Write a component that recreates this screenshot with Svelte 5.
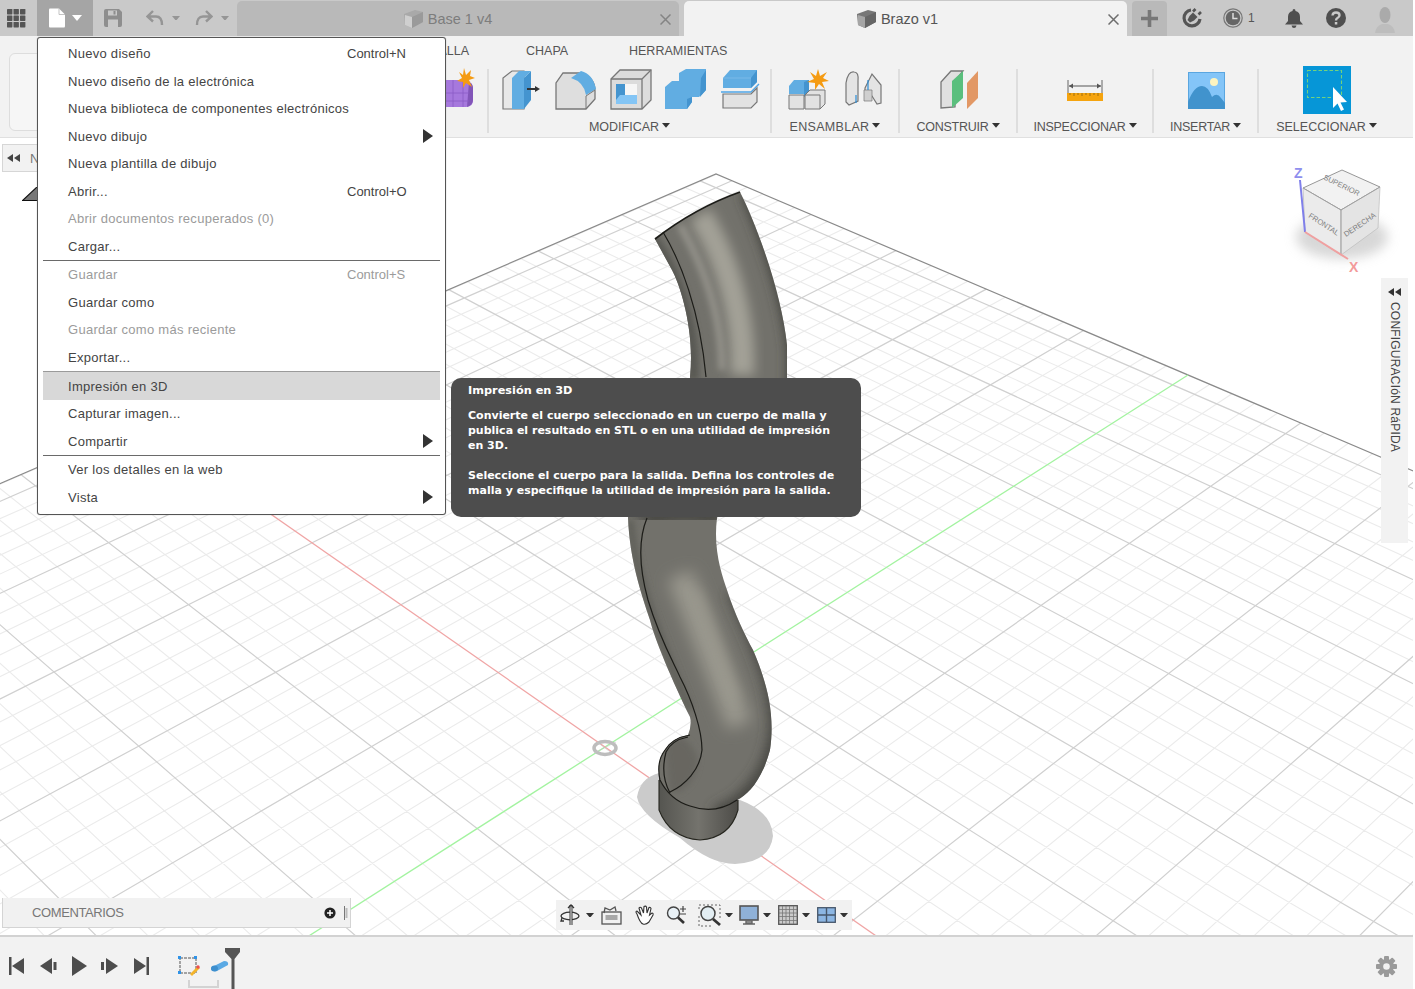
<script>
  const H = (() => {
    const [x0,y0,x1,y1,x2,y2,x3,y3] = [716,174,1188,375,605,747,140,423];
    const dx1=x1-x2,dx2=x3-x2,sx=x0-x1+x2-x3,dy1=y1-y2,dy2=y3-y2,sy=y0-y1+y2-y3;
    const den=dx1*dy2-dx2*dy1;
    const g=(sx*dy2-dx2*sy)/den,h=(dx1*sy-sx*dy1)/den;
    const a=x1-x0+g*x1,b=x3-x0+h*x3,d=y1-y0+g*y1,e=y3-y0+h*y3;
    return (s,t)=>{const w=1+g*s+h*t;return [((a*s+b*t+x0)/w).toFixed(1),((d*s+e*t+y0)/w).toFixed(1)]};
  })();
  const STEP_S = 0.192/5, STEP_T = 0.161/5;
  let minor = '', major = '';
  for (let k = -30; k <= 30; k++) {
    if (k === 0) continue;
    const s = 1 + k*STEP_S, t = 1 + k*STEP_T;
    let seg = '';
    if (s > 0 && s < 2) seg += `M${H(s,0)}L${H(s,2)}`;
    if (t > 0 && t < 2) seg += `M${H(0,t)}L${H(2,t)}`;
    if (k % 5 === 0) major += seg; else minor += seg;
  }
  const edges = `M${H(2,0)}L${H(0,0)}L${H(0,2)}`;
  const green = `M${H(1,0)}L${H(1,2)}`;
  const red = `M${H(0,1)}L${H(2,1)}`;
  const ARM = "M655 239Q695 208 740 192C760 232 782 297 787 345L787 400C780 470 725 490 717 518C713 550 722 575 727 590C735 615 745 635 753 650C768 685 775 715 770 750C762 780 748 795 737 800Q715 815 690 806Q670 800 660 780Q656 762 665 750Q672 738 688 735Q692 725 690 717C672 680 655 640 650 620C640 590 630 560 628 518C632 460 695 420 690 377C695 330 680 285 672 270Z";

  const menu = [
    [{t:'Nuevo diseño',s:'Control+N'},{t:'Nuevo diseño de la electrónica'},{t:'Nueva biblioteca de componentes electrónicos'},{t:'Nuevo dibujo',a:1},{t:'Nueva plantilla de dibujo'},{t:'Abrir...',s:'Control+O'},{t:'Abrir documentos recuperados (0)',d:1},{t:'Cargar...'}],
    [{t:'Guardar',s:'Control+S',d:1},{t:'Guardar como'},{t:'Guardar como más reciente',d:1},{t:'Exportar...'}],
    [{t:'Impresión en 3D',h:1},{t:'Capturar imagen...'},{t:'Compartir',a:1}],
    [{t:'Ver los detalles en la web'},{t:'Vista',a:1}]
  ];
</script>

{#snippet caret(w=8,c='#333')}
  <svg class="caret" width={w} height={w*0.6} viewBox="0 0 10 6"><path d="M0 0H10L5 6Z" fill={c}/></svg>
{/snippet}

{#snippet cube(c1,c2,c3)}
  <svg width="21" height="20" viewBox="0 0 21 20"><path d="M1 5L12 1L20 3V13L9 19L2 16Z" fill={c1}/><path d="M9 8L20 3V13L9 19Z" fill={c2}/><path d="M2 6L9 8V19L2 16Z" fill={c3}/></svg>
{/snippet}

<div class="app">
  <header class="titlebar">
    <div class="tb-grid">
      <svg width="19" height="19" viewBox="0 0 19 19" fill="#555">
        {#each [0,6.5,13] as y}{#each [0,6.5,13] as x}<rect {x} {y} width="5.4" height="5.4" rx=".6"/>{/each}{/each}
      </svg>
    </div>
    <div class="tb-file">
      <svg width="18" height="20" viewBox="0 0 18 20"><path d="M1 1.5Q1 .5 2 .5H11L17 6.5V18Q17 19.500 16 19.500H2Q1 19.500 1 18.500Z" fill="#fff"/><path d="M11 .5V6.500H17" fill="none" stroke="#aaa" stroke-width=".7"/></svg>
      {@render caret(10,'#fff')}
    </div>
    <div class="tb-save">
      <svg width="18" height="18" viewBox="0 0 18 18"><path d="M0 2Q0 0 2 0H15L18 3V16Q18 18 16 18H2Q0 18 0 16Z" fill="#8e8e8e"/><rect x="4" y="1.500" width="9" height="5" fill="#c9c9c9"/><rect x="9.500" y="2" width="2" height="3.500" fill="#8e8e8e"/><rect x="4" y="10.500" width="10" height="7.500" fill="#c9c9c9"/></svg>
    </div>
    <div class="tb-undo">
      <svg width="18" height="16" viewBox="0 0 18 16"><path d="M7 1L1.500 6.500L7 11.500M2 6.500H10Q16 6.500 16 15" fill="none" stroke="#959595" stroke-width="2.400"/></svg>
      {@render caret(8,'#959595')}
    </div>
    <div class="tb-redo">
      <svg width="18" height="16" viewBox="0 0 18 16"><path d="M11 1L16.500 6.500L11 11.500M16 6.500H8Q2 6.500 2 15" fill="none" stroke="#959595" stroke-width="2.400"/></svg>
      {@render caret(8,'#959595')}
    </div>
    <div class="tab tab-off">
      <span class="tab-title">{@render cube('#a9a9a9','#9a9a9a','#cfcfcf')}<span>Base 1 v4</span></span>
      <svg class="tab-x" width="11" height="11" viewBox="0 0 11 11"><path d="M.5.500L10.500 10.500M10.500.500L.5 10.500" stroke="#848484" stroke-width="1.500"/></svg>
    </div>
    <div class="tab tab-on">
      <span class="tab-title">{@render cube('#777','#666','#a5a5a5')}<span>Brazo v1</span></span>
      <svg class="tab-x" width="11" height="11" viewBox="0 0 11 11"><path d="M.5.500L10.500 10.500M10.500.500L.5 10.500" stroke="#6e6e6e" stroke-width="1.500"/></svg>
    </div>
    <div class="tb-plus">
      <svg width="17" height="17" viewBox="0 0 17 17"><path d="M8.500 0V17M0 8.500H17" stroke="#777" stroke-width="3.600"/></svg>
    </div>
    <div class="tb-right">
      <svg class="i-job" width="20" height="20" viewBox="0 0 20 20"><path d="M9 2A8 8 0 1 0 18 11" fill="none" stroke="#555" stroke-width="3.200"/><path d="M5.500 12L7.500 8L11 4.500L15.500 9L12 12.500L8 14.500Z" fill="#555"/><path d="M11 3.500L13.500 1M16.500 6.500L19 4" stroke="#555" stroke-width="2.600"/></svg>
      <span class="i-clock">
        <svg width="20" height="20" viewBox="0 0 20 20"><circle cx="10" cy="10" r="9.200" fill="none" stroke="#777" stroke-width="1.200"/><circle cx="10" cy="10" r="7.300" fill="#666"/><path d="M10 5V10.500H14.500" fill="none" stroke="#ddd" stroke-width="1.500"/></svg>
        <b>1</b>
      </span>
      <svg class="i-bell" width="18" height="19" viewBox="0 0 18 19"><path d="M9 0Q10.500 0 10.500 2Q15 3 15 8V12L18 15.500H0L3 12V8Q3 3 7.500 2Q7.500 0 9 0Z" fill="#4f4f4f"/><path d="M6.500 16.500H11.500Q11 19 9 19Q7 19 6.500 16.500Z" fill="#4f4f4f"/></svg>
      <svg class="i-help" width="20" height="20" viewBox="0 0 20 20"><circle cx="10" cy="10" r="10" fill="#4f4f4f"/><path d="M6.500 7.500Q6.800 4.500 10 4.500Q13.500 4.500 13.500 7.300Q13.500 9 11.500 10Q10 10.800 10 12.500" fill="none" stroke="#c9c9c9" stroke-width="2.400"/><rect x="8.800" y="14" width="2.500" height="2.500" fill="#c9c9c9"/></svg>
      <svg class="i-user" width="20" height="26" viewBox="0 0 20 26"><ellipse cx="10" cy="8" rx="5.500" ry="8" fill="#aaa"/><path d="M0 26Q1 19 7 17H13Q19 19 20 26Z" fill="#bdbdbd"/></svg>
    </div>
  </header>

  <section class="ribbon">
    <nav class="rib-tabs">
      <span class="t-malla">MALLA</span><span class="t-chapa">CHAPA</span><span class="t-herr">HERRAMIENTAS</span>
    </nav>
    <div class="rib-groups">
      <div class="g g-solid">
        <div class="workspace"></div>
        <svg class="purple" width="30" height="42" viewBox="0 0 30 42"><path d="M-4 12H20Q28 14 28 20V32Q28 39 21 39H-4Z" fill="#a678dd"/><path d="M24 14Q28 16 28 20V32Q28 37 22 39Z" fill="#8255b8"/><path d="M-4 25H24M-4 33H24M8 12V39M18 12V39" stroke="#8a5cc6" stroke-width=".8"/><path d="M19 0L21 7L26 2L25 8L30 10L24 12L27 19L21 15L18 20L18 14L12 13L17 10L14 4L18 7Z" fill="#f59b12"/></svg>
      </div>

      <div class="g g-mod">
        <div class="icons">
          <svg width="40" height="42" viewBox="0 0 40 42"><path d="M1 39V9L10 2H22V40H1Z" fill="#e8e8e8" stroke="#777" stroke-width="1.200"/><path d="M10 9H22V40H10Z" fill="#61ade2"/><path d="M22 9L29 2V31L22 40Z" fill="#4494cf"/><path d="M10 9L17 2H29L22 9Z" fill="#61ade2"/><path d="M25 20H34" stroke="#333" stroke-width="2"/><path d="M33 17L38 20L33 23Z" fill="#333"/></svg>
          <svg width="42" height="42" viewBox="0 0 42 42"><path d="M1 40V14L8 4H26Q40 8 40 22V30L31 40Z" fill="#dedede" stroke="#777" stroke-width="1.300"/><path d="M16 9L26 2Q38 5 41 20L31 26Q29 13 16 9Z" fill="#61ade2"/><path d="M31 40V27L40 21" fill="none" stroke="#777" stroke-width="1"/></svg>
          <svg width="42" height="42" viewBox="0 0 42 42"><path d="M1 10L10 1H41V31L32 40H1Z" fill="#dcdcdc" stroke="#777" stroke-width="1.300"/><path d="M1 10H32V40M32 10L41 1" fill="none" stroke="#777" stroke-width="1.300"/><rect x="6" y="15" width="21" height="20" fill="#f6f6f6"/><path d="M6 15H15V26H27V35H6Z" fill="#84c5f5"/><path d="M6 15H15V26H10L6 31Z" fill="#4494cf"/></svg>
          <svg width="42" height="42" viewBox="0 0 42 42"><path d="M0 18L7 12H14V4L21 0H41V21L34 28H27V33L22 40H0Z" fill="#61ade2"/><path d="M36 9L41 1V21L35 28ZM22 30V40L27 33V28Z" fill="#4494cf"/></svg>
          <svg width="42" height="42" viewBox="0 0 42 42"><path d="M3 9L10 1H37V13L31 19H3Z" fill="#61ade2"/><path d="M31 9L37 1V13L31 19Z" fill="#4494cf"/><path d="M3 9H31" stroke="#8cc4ee" stroke-width=".6"/><path d="M1 23H31L39 15" fill="none" stroke="#4fa5e6" stroke-width="1.400"/><path d="M3 25H31L37 19V33L31 39H3Z" fill="#e2e2e2" stroke="#777" stroke-width="1.200"/></svg>
        </div>
        <div class="lbl">MODIFICAR {@render caret()}</div>
      </div>

      <div class="g g-asm">
        <div class="icons">
          <svg width="42" height="42" viewBox="0 0 42 42"><path d="M1 17L6 11H21V25H1Z" fill="#61ade2"/><path d="M16 13L21 11V25L16 28Z" fill="#4494cf"/><path d="M1 26H16V40H1Z" fill="#e2e2e2" stroke="#777"/><path d="M17 26H32V40H17ZM17 26L22 21H37V35L32 40" fill="#e2e2e2" stroke="#777"/><path d="M30 0L32 7L39 3L35 9L41 12L34 13L37 20L31 15L27 21L27 14L19 13L26 10L22 3L28 7Z" fill="#f59b12"/></svg>
          <svg width="38" height="42" viewBox="0 0 38 42"><path d="M2 14Q4 2 10 3Q15 3 14 12V32L5 36L2 33Z" fill="#e4e4e4" stroke="#777" stroke-width="1.200"/><path d="M21 19L28 5L37 16V34L33 35L28 27H21Z" fill="#e4e4e4" stroke="#777" stroke-width="1.200"/><path d="M20 21H28V32H20Z" fill="#cfcfcf" stroke="#777" stroke-width=".7"/><path d="M12 26V34M24 11V21" stroke="#2b8ed8" stroke-width="1.200"/></svg>
        </div>
        <div class="lbl">ENSAMBLAR {@render caret()}</div>
      </div>

      <div class="g g-con">
        <div class="icons">
          <svg width="40" height="42" viewBox="0 0 40 42"><path d="M1 39V13L11 2H23L15 12V38Z" fill="#e0e0e0" stroke="#777" stroke-width="1.300"/><path d="M12 39V12L23 2V29Z" fill="#5abf7d"/><path d="M27 40V14L38 2V29Z" fill="#e29865"/></svg>
        </div>
        <div class="lbl">CONSTRUIR {@render caret()}</div>
      </div>

      <div class="g g-ins">
        <div class="icons">
          <svg width="36" height="42" viewBox="0 0 36 42"><path d="M1 11V24M35 11V24" stroke="#555" stroke-width=".9"/><path d="M2 17H34" stroke="#555" stroke-width="1"/><path d="M2 17L6 14.500V19.500ZM34 17L30 14.500V19.500Z" fill="#555"/><rect x="0" y="24" width="36" height="8" fill="#f5a40f"/><path d="M3 24v2M7 24v3M11 24v2M15 24v3M19 24v2M23 24v3M27 24v2M31 24v3" stroke="#7c5a10" stroke-width=".7"/></svg>
        </div>
        <div class="lbl">INSPECCIONAR {@render caret()}</div>
      </div>

      <div class="g g-ins2">
        <div class="icons">
          <svg width="37" height="37" viewBox="0 0 37 37"><rect width="37" height="37" fill="#84c5f8"/><rect x=".5" y=".5" width="36" height="36" fill="none" stroke="#5aa6e0"/><circle cx="26" cy="10" r="4" fill="#fdf4c0"/><path d="M0 30Q6 14 14 14Q20 14 24 25Q29 20 33 26L37 31V37H0Z" fill="#4193cd"/></svg>
        </div>
        <div class="lbl">INSERTAR {@render caret()}</div>
      </div>

      <div class="g g-sel">
        <div class="icons">
          <svg width="48" height="48" viewBox="0 0 48 48"><rect width="48" height="48" fill="#0696d7"/><rect x="4.500" y="4.500" width="34" height="27" fill="none" stroke="#73d27d" stroke-width="1.100" stroke-dasharray="3.500 2"/><path d="M30 21L30 42L34.500 37.500L38 45L41 43.500L37.500 36.500L44 36Z" fill="#fff"/></svg>
        </div>
        <div class="lbl">SELECCIONAR {@render caret()}</div>
      </div>
    </div>
  </section>

  <main class="view">
    <svg class="scene" width="1413" height="797" viewBox="0 138 1413 797">
      <defs>
        <linearGradient id="baseG" x1="0" y1="0" x2="1" y2="0">
          <stop offset="0" stop-color="#555550"/><stop offset=".5" stop-color="#74736d"/><stop offset="1" stop-color="#4d4c48"/>
        </linearGradient>
        <filter id="b8" x="-50%" y="-50%" width="200%" height="200%"><feGaussianBlur stdDeviation="8"/></filter>
        <filter id="b6" x="-50%" y="-50%" width="200%" height="200%"><feGaussianBlur stdDeviation="6"/></filter>
        <filter id="b3" x="-50%" y="-50%" width="200%" height="200%"><feGaussianBlur stdDeviation="3"/></filter>
        <clipPath id="armClip"><path d={ARM}/></clipPath>
      </defs>

      <path d={minor} stroke="#ebebeb" stroke-width="1.100" fill="none"/>
      <path d={major} stroke="#d0d0d0" stroke-width="1.200" fill="none"/>
      <path d={edges} stroke="#8a8a8a" stroke-width="1.200" fill="none"/>
      <path d={green} stroke="#a3f3a0" stroke-width="1.300" fill="none"/>
      <path d={red} stroke="#f0a5a5" stroke-width="1.300" fill="none"/>

      <path d="M637 797Q640 778 659 773L740 800Q772 812 773 836Q770 862 735 864Q710 864 680 838Q640 815 637 797Z" fill="#cbcbcb"/>
      <ellipse cx="605" cy="748" rx="11" ry="6.500" fill="none" stroke="#bdbdbd" stroke-width="3.500"/>
      <path d="M594 753L616 742M597 742L613 754" stroke="#c5c5c5" stroke-width=".6"/>

      <path d="M659 770V810Q670 838 700 840Q730 838 738 810V790Z" fill="url(#baseG)"/>
      <path d="M659 780V810Q670 838 700 840Q730 838 738 810V800" fill="none" stroke="#26261f" stroke-width="1.100"/>

      <path d={ARM} fill="#72716b"/>

      <g clip-path="url(#armClip)">
        <path d="M750 190C772 240 792 300 797 350V420" fill="none" stroke="#3f3f3b" stroke-width="20" filter="url(#b6)"/>
        <path d="M650 235C675 270 695 320 693 380" fill="none" stroke="#585853" stroke-width="12" filter="url(#b3)"/>
        <path d="M700 215C728 260 745 320 742 375" fill="none" stroke="#a3a197" stroke-width="24" filter="url(#b6)"/>
        <path d="M680 225C700 260 722 310 722 370" fill="none" stroke="#94938b" stroke-width="7" filter="url(#b3)"/>
        <path d="M640 515C660 505 700 500 725 515" fill="none" stroke="#45443f" stroke-width="34" filter="url(#b8)"/>
        <path d="M680 575C700 625 720 675 740 725" fill="none" stroke="#9a988e" stroke-width="26" filter="url(#b8)"/>
        <path d="M696 590C708 620 722 660 736 700" fill="none" stroke="#a09e93" stroke-width="5" filter="url(#b6)"/>
        <path d="M735 590C755 640 778 680 777 730C772 775 745 805 715 815" fill="none" stroke="#474642" stroke-width="16" filter="url(#b6)"/>
        <path d="M630 520C634 570 655 630 690 710" fill="none" stroke="#5e5e58" stroke-width="7" filter="url(#b3)"/>
        <path d="M665 745C672 730 690 735 698 760C695 785 680 795 670 792Z" fill="#676660" filter="url(#b3)"/>
      </g>

      <g fill="none" stroke="#1c1c18" stroke-width="1.200">
        <path d="M655 239Q695 208 740 192" stroke-width="1.800"/>
        <path d="M663 232C680 260 700 310 706 377"/>
        <path d="M647 518C640 535 637 560 648 600C660 640 675 665 680 677C692 700 702 730 702 750C700 770 685 785 670 792"/>
        <path d="M690 735Q672 738 665 750Q656 762 660 780Q670 800 690 806Q715 815 737 800"/>
        <path d="M688 737Q672 740 666 752Q660 775 670 793"/>
      </g>

      <g>
        <ellipse cx="1342" cy="237" rx="46" ry="22" fill="#bdbdbd" opacity=".6" filter="url(#b6)"/>
        <path d="M1303 188L1342 170L1380 187L1341 210Z" fill="#f2f2f2" stroke="#8b8b8b" stroke-width=".9"/>
        <path d="M1303 188L1341 210V255L1305 232Z" fill="#ebebeb" stroke="#b5b5b5" stroke-width=".7"/>
        <path d="M1341 210L1380 187L1378 228L1341 255Z" fill="#e4e4e4" stroke="#bcbcbc" stroke-width=".7"/>
        <path d="M1341 210V255M1341 210L1303 188M1341 210L1380 187" stroke="#999" stroke-width=".8" fill="none"/>
        <path d="M1300 180L1305 232" stroke="#7f7fea" stroke-width="2"/>
        <path d="M1305 232L1348 259" stroke="#f0a0a0" stroke-width="2"/>
        <text x="1294" y="178" class="ax" fill="#8f8fee">Z</text>
        <text x="1349" y="272" class="ax" fill="#f39a9a">X</text>
        <text transform="translate(1323 179) rotate(26)" class="cl">SUPERIOR</text>
        <text transform="translate(1308 217) rotate(33)" class="cl">FRONTAL</text>
        <text transform="translate(1346 237) rotate(-34)" class="cl">DERECHA</text>
      </g>
    </svg>

    <div class="browser">
      <svg width="13" height="8" viewBox="0 0 13 8"><path d="M6 0V8L0 4ZM13 0V8L7 4Z" fill="#444"/></svg><span>N</span>
    </div>
    <svg class="origin" width="15" height="14" viewBox="0 0 15 14"><path d="M0 14L15 0V14Z" fill="#777"/><path d="M0 14L15 0M0 13.500H15" stroke="#111" stroke-width="1.200"/></svg>

    <aside class="quick">
      <svg width="13" height="8" viewBox="0 0 13 8"><path d="M6 0V8L0 4ZM13 0V8L7 4Z" fill="#333"/></svg>
      <span>CONFIGURACIóN RáPIDA</span>
    </aside>

    <div class="comments">
      <span>COMENTARIOS</span>
      <svg class="c-plus" width="12" height="12" viewBox="0 0 12 12"><circle cx="6" cy="6" r="5.600" fill="#222"/><path d="M6 3V9M3 6H9" stroke="#fff" stroke-width="1.500"/></svg>
      <svg class="c-grip" width="4" height="14" viewBox="0 0 4 14"><path d="M.5 0V14" stroke="#777"/><path d="M2.500 2V12" stroke="#bbb" stroke-width="2"/></svg>
    </div>

    <div class="navbar">
      <svg width="22" height="22" viewBox="0 0 22 22" fill="none" stroke="#333" stroke-width="1.300"><ellipse cx="10" cy="12" rx="9" ry="3.800"/><path d="M11 1V21" stroke-width="3"/><path d="M11 1V21" stroke="#f0f0f0" stroke-width="1"/><path d="M8 4L11 1L14 4"/><path d="M2 14L1 17L4 17"/></svg>
      {@render caret(8)}
      <svg class="m3" width="21" height="19" viewBox="0 0 21 19" fill="none" stroke="#555" stroke-width="1.300"><path d="M3 7L4 2L9 4L14 1L15 5"/><rect x="1" y="6" width="19" height="12"/><rect x="4.500" y="9" width="12" height="5" fill="#a8a8a8" stroke="none"/></svg>
      <svg class="m8" width="21" height="21" viewBox="0 0 21 21" fill="#fff" stroke="#333" stroke-width="1.100"><path d="M3 9Q1 6.500 3 6L7 10L5 3Q6 1.500 7.500 3L9.500 8L10 1.500Q11.500 .5 12.500 2L13 8L15 2.500Q16.500 2 17 3.500L15.500 10L18 8Q19.500 8 19 10L15 17Q12 20 9 19Q6 18 3 9Z"/></svg>
      <svg class="m7" width="22" height="20" viewBox="0 0 22 20" fill="none"><circle cx="7.500" cy="8" r="6" stroke="#444" stroke-width="1.400" fill="#e9f1f6"/><path d="M12 12.500L18 18" stroke="#333" stroke-width="2.600"/><path d="M17 1V7M14 4H20M14 9H20" stroke="#444" stroke-width="1.200"/></svg>
      <svg class="m6" width="23" height="23" viewBox="0 0 23 23" fill="none"><path d="M1 5V1H22V16M1 12V22H14" stroke="#666" stroke-dasharray="2 2"/><circle cx="10" cy="9.500" r="7" stroke="#444" stroke-width="1.500" fill="#e3eef3"/><path d="M15 15L22 21" stroke="#333" stroke-width="2.800"/></svg>
      {@render caret(8)}
      <svg class="m2" width="20" height="21" viewBox="0 0 20 21"><rect x="1" y="1" width="18" height="14" fill="#8fb1d8" stroke="#555" stroke-width="1.600"/><path d="M7 16H13V18H7ZM4 19H16" stroke="#666" fill="none" stroke-width="1.400"/></svg>
      {@render caret(8)}
      <svg class="m3" width="20" height="20" viewBox="0 0 20 20"><rect x=".7" y=".7" width="18.600" height="18.600" fill="#cbcbcb" stroke="#555" stroke-width="1.300"/><path d="M4.500 1V19M8 1V19M11.500 1V19M15.500 1V19M1 4.500H19M1 8H19M1 11.500H19M1 15.500H19" stroke="#777" stroke-width=".8"/></svg>
      {@render caret(8)}
      <svg class="m3" width="19" height="16" viewBox="0 0 19 16"><rect x=".7" y=".7" width="17.600" height="14.600" fill="#8cb6e3" stroke="#47576b" stroke-width="1.300"/><path d="M9.500 1V15M1 8H18" stroke="#47576b" stroke-width="1.400"/></svg>
      {@render caret(8)}
    </div>
  </main>

  <footer class="timeline">
    <div class="controls">
      <svg width="16" height="18" viewBox="0 0 16 18"><rect width="2.500" height="18" fill="#4d4d4d"/><path d="M15 1V17L3 9Z" fill="#4d4d4d"/></svg>
      <svg width="17" height="16" viewBox="0 0 17 16"><path d="M12 0V16L0 8Z" fill="#4d4d4d"/><rect x="13.500" y="4" width="3" height="8" fill="#4d4d4d"/></svg>
      <svg width="15" height="20" viewBox="0 0 15 20"><path d="M0 0V20L15 10Z" fill="#4d4d4d"/></svg>
      <svg width="17" height="16" viewBox="0 0 17 16"><rect y="4" width="3" height="8" fill="#4d4d4d"/><path d="M5 0V16L17 8Z" fill="#4d4d4d"/></svg>
      <svg width="16" height="18" viewBox="0 0 16 18"><path d="M1 1V17L13 9Z" fill="#4d4d4d"/><rect x="13.500" width="2.500" height="18" fill="#4d4d4d"/></svg>
    </div>
    <div class="steps">
      <svg width="22" height="20" viewBox="0 0 22 20"><rect x="2" y="2" width="16" height="15" fill="none" stroke="#555" stroke-dasharray="3 1"/><path d="M0 0h3v3H0zM16 0h3v3h-3zM0 15h3v3H0z" fill="#2f93e8"/><path d="M12 18L20 10L22 12L14 20Z" fill="#f4b42a"/><circle cx="20" cy="11" r="1.700" fill="#ef4f4f"/></svg>
      <svg width="19" height="11" viewBox="0 0 19 11"><path d="M4 5L14 0Q19 0 18 4L7 10Q1 11 1 7Q1 6 4 5Z" fill="#5aa9e4"/><ellipse cx="4.500" cy="7.500" rx="3.500" ry="3" fill="#3e8fce"/></svg>
      <svg class="marker" width="16" height="41" viewBox="0 0 16 41"><path d="M0 0H15V4L9.500 11V41H6.500V11L0 4Z" fill="#555"/></svg>
      <span class="bracket"></span>
    </div>
    <svg class="gear" width="21" height="21" viewBox="0 0 21 21"><g fill="#9a9a9a"><circle cx="10.500" cy="10.500" r="7.500"/>{#each [0,45,90,135] as a}<rect x="8" y="0" width="5" height="21" rx="1" transform={`rotate(${a} 10.500 10.500)`}/>{/each}</g><circle cx="10.500" cy="10.500" r="3.300" fill="#f1f1f1"/></svg>
  </footer>

  <div class="menu">
    {#each menu as sec, si}
      {#if si > 0}<hr class:dark={si===2}/>{/if}
      {#each sec as it}
        <div class="item" class:dis={it.d} class:hi={it.h}>
          <span class="it-t">{it.t}</span>
          {#if it.s}<span class="it-s">{it.s}</span>{/if}
          {#if it.a}<i class="it-a"></i>{/if}
        </div>
      {/each}
    {/each}
  </div>

  <div class="tip">
    <p class="title">Impresión en 3D</p>
    <p class="body">Convierte el cuerpo seleccionado en un cuerpo de malla y<br/>publica el resultado en STL o en una utilidad de impresión<br/>en 3D.<br/><br/>Seleccione el cuerpo para la salida. Defina los controles de<br/>malla y especifique la utilidad de impresión para la salida.</p>
  </div>
</div>

<style>
  :global(body){margin:0;background:#fff}
  .app{position:relative;width:1413px;height:989px;display:flex;flex-direction:column;overflow:hidden;font-family:"Liberation Sans",Arial,sans-serif;color:#555}
  svg{display:block;flex:none}
  .titlebar{height:36px;background:#c9c9c9;display:flex;align-items:stretch;flex:none}
  .tb-grid{width:37px;display:flex;align-items:center;padding-left:7px;box-sizing:border-box}
  .tb-file{width:56px;background:#a5a5a5;display:flex;align-items:center;gap:6px;padding-left:11px;box-sizing:border-box}
  .tb-save{width:48px;display:flex;align-items:center;padding-left:11px;box-sizing:border-box}
  .tb-undo{width:49px;display:flex;align-items:center;gap:8px;padding-left:5px;box-sizing:border-box}
  .tb-redo{width:49px;display:flex;align-items:center;gap:8px;padding-left:5px;box-sizing:border-box}
  .tab{height:35px;margin-top:1px;border-radius:5px 5px 0 0;display:flex;align-items:center;justify-content:center;position:relative;font-size:14.500px;box-sizing:border-box;padding-right:17px}
  .tab-off{width:442px;background:#b9b9b9;color:#7d7d7d;margin-left:-2px;padding-right:21px}
  .tab-on{width:443px;background:#f2f2f2;color:#555;margin-left:5px}
  .tab-title{display:flex;align-items:center;gap:4px}
  .tab-x{position:absolute;right:8px;top:13px}
  .tb-plus{width:35px;margin-left:5px;margin-top:1px;background:#b9b9b9;border-radius:4px 4px 0 0;display:flex;align-items:center;justify-content:center}
  .tb-right{flex:1;display:flex;align-items:center;position:relative;padding-left:15px}
  .i-clock{display:flex;align-items:center;gap:5px;margin-left:21px;font-size:12px;color:#555}
  .i-clock b{font-weight:400}
  .i-bell{margin-left:30px}
  .i-help{margin-left:23px}
  .i-user{margin-left:29px;margin-top:4px}

  .ribbon{height:102px;background:#f2f2f2;border-bottom:1px solid #e0e0e0;box-sizing:border-box;flex:none;display:flex;flex-direction:column}
  .rib-tabs{height:27px;display:flex;align-items:center;font-size:12.500px;color:#555;padding-top:2px;box-sizing:border-box;padding-left:428px}
  .t-malla{width:98px}.t-chapa{width:103px}
  .rib-groups{display:flex;height:68px;margin-top:6px}
  .g{display:flex;flex-direction:column;align-items:center;box-sizing:border-box;border-right:2px solid #dedede;height:64px;justify-content:space-between}
  .g-solid{width:489px;position:relative}
  .workspace{position:absolute;left:9px;top:-16px;width:40px;height:76px;border:1px solid #ddd;border-radius:6px;background:#f6f6f6}
  .purple{position:absolute;left:445px;top:-1px}
  .icons{display:flex;align-items:center;height:42px;gap:12px}
  .g-mod{width:283px}
  .g-mod .icons{width:100%;padding-left:13px;box-sizing:border-box;gap:13px}
  .g-asm{width:128px}
  .g-asm .icons{gap:14px}
  .g-asm .lbl{letter-spacing:.3px}
  .g-con{width:118px}
  .g-con .icons{padding-left:3px}
  .g-con .lbl,.g-ins .lbl,.g-ins2 .lbl{letter-spacing:-.25px}
  .g-ins{width:136px}
  .g-ins2{width:105px}
  .g-ins2 .icons{padding-left:2px}
  .g-sel{width:135px;border-right:none}
  .g-sel .icons{margin-top:-3px;height:48px}
  .lbl{display:flex;align-items:center;gap:3px;font-size:12.500px;color:#555;line-height:16px;height:16px;margin-bottom:-2px}
  .lbl .caret{margin-top:-3px}

  .view{flex:1;position:relative;background:#fff;overflow:hidden}
  .scene{position:absolute;left:0;top:0}
  .ax{font:700 14px "Liberation Sans",sans-serif}
  .cl{font:7.500px "Liberation Sans",sans-serif;fill:#808080}

  .browser{position:absolute;left:2px;top:6px;width:60px;height:28px;background:#f2f2f2;border:1px solid #d6d6d6;box-sizing:border-box;display:flex;align-items:center;gap:10px;padding-left:4px;font-size:13px;color:#777}
  .origin{position:absolute;left:22px;top:49px}
  .quick{position:absolute;left:1381px;top:140px;width:27px;height:265px;background:#f2f2f2;display:flex;flex-direction:column;align-items:center;padding-top:10px;box-sizing:border-box;gap:6px;color:#444;font-size:12px}
  .quick span{writing-mode:vertical-rl;letter-spacing:.2px}
  .comments{position:absolute;left:2px;top:760px;width:349px;height:30px;background:#f1f1f1;border:1px solid #d4d4d4;border-top:none;box-sizing:border-box;display:flex;align-items:center;padding-left:29px;font-size:13px;color:#777}
  .comments span{flex:1;letter-spacing:-.4px}
  .c-plus{margin-right:8px}
  .c-grip{margin-right:2px}
  .navbar{position:absolute;left:556px;top:762px;width:296px;height:30px;background:#f1f1f1;display:flex;align-items:center;padding-left:4px;box-sizing:border-box;gap:4px}
  .m2{margin-left:2px}.m3{margin-left:3px}.m6{margin-left:6px}.m7{margin-left:7px}.m8{margin-left:8px}

  .timeline{height:54px;flex:none;background:#f2f2f2;border-top:2px solid #d2d2d2;box-sizing:border-box;display:flex;align-items:center;position:relative}
  .controls{display:flex;align-items:center;justify-content:space-between;width:140px;margin-left:9px;margin-top:6px}
  .steps{position:relative;display:flex;align-items:center;gap:10px;margin-left:29px;padding-top:6px;box-sizing:border-box;height:100%}
  .marker{margin-left:-14px;margin-top:5px;align-self:flex-start}
  .bracket{position:absolute;left:10px;bottom:1px;width:31px;height:8px;border:2px solid #d3d3d3;border-top:none;box-sizing:border-box}
  .gear{position:absolute;left:1376px;top:19px}

  .menu{position:absolute;left:37px;top:37px;width:409px;height:478px;background:#fff;border:1px solid #555;border-radius:3px;box-sizing:border-box;padding:2px 5px 0;font-size:13px;color:#444;box-shadow:0 0 1px #888}
  .item{height:27.500px;display:flex;align-items:center;padding-left:25px;letter-spacing:.28px;position:relative}
  .it-t{flex:1}
  .it-s{width:93px;letter-spacing:0}
  .it-a{width:0;height:0;border-left:10px solid #333;border-top:7px solid transparent;border-bottom:7px solid transparent;margin-right:7px}
  .dis{color:#9b9b9b}
  .hi{background:#d8d8d8;height:28px}
  hr{margin:0;border:none;border-top:1.500px solid #6a6a6a;height:0}
  hr.dark{border-top-color:#9a9a9a}

  .tip{position:absolute;left:451px;top:378px;width:410px;height:139px;background:#4d4d4d;border-radius:10px;box-sizing:border-box;padding:5px 17px;color:#fff;font:700 11px/15px "DejaVu Sans",sans-serif}
  .tip p{margin:0}
  .tip .title{font-size:11.300px}
  .tip .body{margin-top:10px}
</style>
